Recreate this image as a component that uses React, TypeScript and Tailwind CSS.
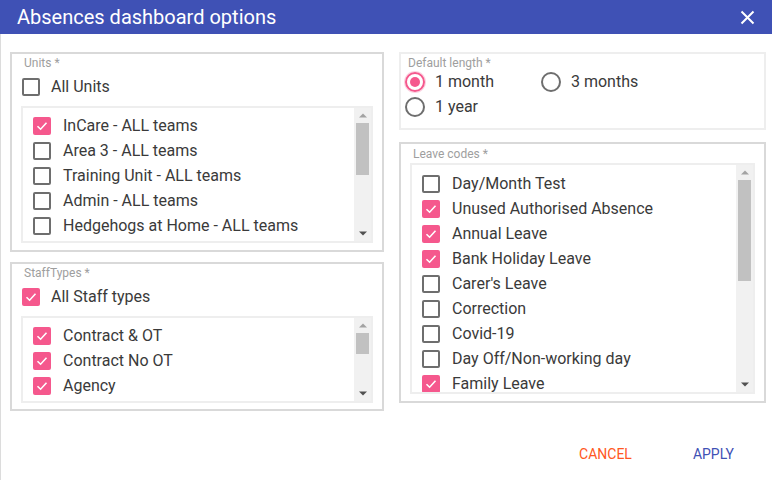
import React from 'react'

type Item = { label: string; checked: boolean }

// the last entry of each list is scrolled out of view, only its checkbox top shows
const units: Item[] = [
  { label: 'InCare - ALL teams', checked: true },
  { label: 'Area 3 - ALL teams', checked: false },
  { label: 'Training Unit - ALL teams', checked: false },
  { label: 'Admin - ALL teams', checked: false },
  { label: 'Hedgehogs at Home - ALL teams', checked: false },
  { label: '', checked: false },
]

const staffTypes: Item[] = [
  { label: 'Contract & OT', checked: true },
  { label: 'Contract No OT', checked: true },
  { label: 'Agency', checked: true },
  { label: '', checked: true },
]

const leaveCodes: Item[] = [
  { label: 'Day/Month Test', checked: false },
  { label: 'Unused Authorised Absence', checked: true },
  { label: 'Annual Leave', checked: true },
  { label: 'Bank Holiday Leave', checked: true },
  { label: "Carer's Leave", checked: false },
  { label: 'Correction', checked: false },
  { label: 'Covid-19', checked: false },
  { label: 'Day Off/Non-working day', checked: false },
  { label: 'Family Leave', checked: true },
]

function Checkbox({ checked }: { checked: boolean }) {
  if (checked) {
    return (
      <span className="w-[18px] h-[18px] rounded-[2px] bg-[#f5588d] flex items-center justify-center shrink-0">
        <svg width="14" height="14" viewBox="0 0 14 14" fill="none">
          <path d="M2.5 7.2 L5.6 10.2 L11.5 3.8" stroke="white" strokeWidth="1.6" />
        </svg>
      </span>
    )
  }
  return <span className="w-[18px] h-[18px] rounded-[2px] border-2 border-[#6e6e6e] shrink-0" />
}

function Radio({ checked }: { checked: boolean }) {
  if (checked) {
    return (
      <span className="w-[20px] h-[20px] rounded-full border-2 border-[#f5588d] shadow-[0_0_0_1px_#fcd3e1] flex items-center justify-center shrink-0">
        <span className="w-[10px] h-[10px] rounded-full bg-[#f5588d]" />
      </span>
    )
  }
  return <span className="w-[20px] h-[20px] rounded-full border-2 border-[#6e6e6e] shrink-0" />
}

function Row({ item }: { item: Item }) {
  return (
    <div className="h-[25px] flex items-center shrink-0">
      <Checkbox checked={item.checked} />
      {item.label && (
        <span className="ml-[12px] text-[16px] text-[#3a3a3a] whitespace-nowrap">{item.label}</span>
      )}
    </div>
  )
}

function Arrow({ up }: { up: boolean }) {
  return (
    <div className="h-[15px] flex items-center justify-center shrink-0">
      <svg width="8" height="5" viewBox="0 0 8 5">
        {up ? (
          <polygon points="0,4.5 4,0.5 8,4.5" fill="#a3a3a3" />
        ) : (
          <polygon points="0,0.5 8,0.5 4,4.5" fill="#505050" />
        )}
      </svg>
    </div>
  )
}

function ScrollList({
  items,
  boxClass,
  thumbClass,
  padClass = 'pt-[5px]',
}: {
  items: Item[]
  boxClass: string
  thumbClass: string
  padClass?: string
}) {
  return (
    <div className={`border-2 border-[#eeeeee] flex ${boxClass}`}>
      <div className={`flex-1 bg-white overflow-hidden pl-[10px] flex flex-col ${padClass}`}>
        {items.map((it, i) => (
          <Row key={i} item={it} />
        ))}
      </div>
      <div className="w-[17px] bg-[#f1f1f1] flex flex-col">
        <Arrow up />
        <div className={`mx-[2px] bg-[#c1c1c1] shrink-0 ${thumbClass}`} />
        <div className="flex-1" />
        <Arrow up={false} />
      </div>
    </div>
  )
}

function Label({ text }: { text: string }) {
  return <div className="text-[12px] leading-[12px] text-[#9e9e9e] pt-[3px] pl-[3px]">{text}</div>
}

export default function App() {
  return (
    <div className="w-[772px] h-[480px] bg-white overflow-hidden font-['Roboto',sans-serif]">
      {/* Header */}
      <div className="h-[34px] bg-[#3f51b5] flex items-center justify-between pl-[17px] pr-[17px]">
        <span className="text-white text-[20px]">Absences dashboard options</span>
        <svg width="15" height="15" viewBox="0 0 15 15">
          <path d="M1.5 1.5 L13.5 13.5 M13.5 1.5 L1.5 13.5" stroke="white" strokeWidth="2" />
        </svg>
      </div>

      <div className="h-[446px] border-l border-[#dcdcdc]">
        <div className="flex pl-[9px] pt-[18px] gap-[15px]">
          {/* Left column */}
          <div className="w-[374px] flex flex-col gap-[10px]">
            <div className="h-[200px] border-2 border-[#d9d9d9] px-[9px]">
              <Label text="Units *" />
              <div className="mt-[5px] ml-[1px] h-[25px] flex items-center">
                <Checkbox checked={false} />
                <span className="ml-[11px] text-[16px] text-[#3a3a3a]">All Units</span>
              </div>
              <div className="mt-[7px]">
                <ScrollList items={units} boxClass="h-[137px]" thumbClass="h-[52px]" />
              </div>
            </div>

            <div className="h-[149px] border-2 border-[#d9d9d9] px-[9px]">
              <Label text="StaffTypes *" />
              <div className="mt-[5px] ml-[1px] h-[25px] flex items-center">
                <Checkbox checked />
                <span className="ml-[11px] text-[16px] text-[#3a3a3a]">All Staff types</span>
              </div>
              <div className="mt-[7px]">
                <ScrollList items={staffTypes} boxClass="h-[87px]" thumbClass="h-[21px]" />
              </div>
            </div>
          </div>

          {/* Right column */}
          <div className="w-[367px] flex flex-col gap-[12px]">
            <div className="h-[78px] border-2 border-[#eeeeee] px-[4px]">
              <Label text="Default length *" />
              <div className="grid grid-cols-[136px_auto]">
                <div className="h-[25px] flex items-center">
                  <Radio checked />
                  <span className="ml-[10px] text-[16px] text-[#3a3a3a]">1 month</span>
                </div>
                <div className="h-[25px] flex items-center">
                  <Radio checked={false} />
                  <span className="ml-[10px] text-[16px] text-[#3a3a3a]">3 months</span>
                </div>
                <div className="h-[25px] flex items-center">
                  <Radio checked={false} />
                  <span className="ml-[10px] text-[16px] text-[#3a3a3a]">1 year</span>
                </div>
              </div>
            </div>

            <div className="h-[261px] border-2 border-[#d9d9d9] px-[9px]">
              <div className="pt-[1px]">
                <Label text="Leave codes *" />
              </div>
              <div className="mt-[3px]">
                <ScrollList
                  items={leaveCodes}
                  boxClass="h-[231px]"
                  thumbClass="h-[101px]"
                  padClass="pt-[6px]"
                />
              </div>
            </div>
          </div>
        </div>

        {/* Footer */}
        <div className="flex justify-end pr-[22px] mt-[25px] gap-[29px]">
          <button className="h-[36px] px-[16px] text-[14px] text-[#ff5722]">CANCEL</button>
          <button className="h-[36px] px-[16px] text-[14px] text-[#3f51b5]">APPLY</button>
        </div>
      </div>
    </div>
  )
}
